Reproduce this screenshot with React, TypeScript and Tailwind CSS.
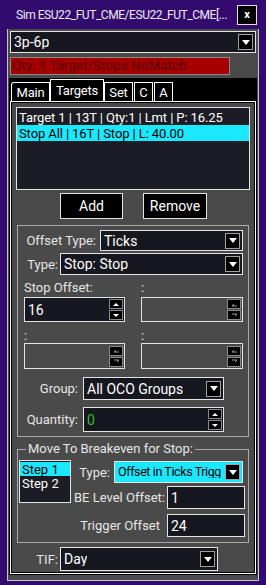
import React from "react";

const font = "font-['Roboto',_'Liberation_Sans',_sans-serif]";

function Arrow() {
  return (
    <div className="ml-auto mr-[2px] w-[15px] h-[16px] bg-black border border-[#a0a0a0] flex items-center justify-center shrink-0">
      <svg width="8" height="5" viewBox="0 0 8 5">
        <path d="M0 0h8L4 5z" fill="white" />
      </svg>
    </div>
  );
}

function Combo({ value, className, cyan }: { value: string; className: string; cyan?: boolean }) {
  return (
    <div
      className={`flex items-center border border-[#e4e4e4] overflow-hidden whitespace-nowrap shrink-0 ${
        cyan ? "bg-[#19e8ff] text-black" : "bg-[#17171f] text-white"
      } ${className}`}
    >
      <span className="pl-[3px] overflow-hidden">{value}</span>
      <Arrow />
    </div>
  );
}

function SpinBtn({ up, off }: { up?: boolean; off?: boolean }) {
  return (
    <div className="w-[14px] h-[10px] bg-black border border-[#8a8a8a] flex items-center justify-center">
      {off ? (
        <svg width="7" height="5" viewBox="0 0 7 5">
          {up ? (
            <path d="M1 4h5M1 4l2-2" stroke="#9a9a9a" strokeWidth="1" fill="none" />
          ) : (
            <path d="M1 1h5M6 1l-2 2" stroke="#9a9a9a" strokeWidth="1" fill="none" />
          )}
        </svg>
      ) : (
        <svg width="6" height="3" viewBox="0 0 6 3">
          <path d={up ? "M0 3h6L3 0z" : "M0 0h6L3 3z"} fill="white" />
        </svg>
      )}
    </div>
  );
}

function Spinner({ value, className, off, green }: { value?: string; className: string; off?: boolean; green?: boolean }) {
  return (
    <div
      className={`flex items-center border border-[#e4e4e4] shrink-0 ${off ? "bg-[#4a4a4a]" : "bg-[#17171f]"} ${className}`}
    >
      <span className={`pl-[3px] ${green ? "text-[#2ec02e]" : "text-white"}`}>{value}</span>
      <div className="ml-auto mr-[1px] flex flex-col gap-[1px]">
        <SpinBtn up off={off} />
        <SpinBtn off={off} />
      </div>
    </div>
  );
}

function TextBox({ value }: { value: string }) {
  return (
    <div className="w-[78px] h-[23px] border border-[#e4e4e4] bg-[#17171f] text-white text-[14px] flex items-center pl-[3px] shrink-0">
      {value}
    </div>
  );
}

export default function App() {
  return (
    <div className={`w-[266px] h-[585px] bg-[#330a6e] text-[13px] leading-none text-[#e6e6e6] overflow-hidden ${font}`}>
      <div className="h-[29px] flex items-center pl-[16px] pr-[9px]">
        <span className="text-[12px] tracking-[-0.45px] text-[#ececf4] whitespace-nowrap">
          Sim ESU22_FUT_CME/ESU22_FUT_CME[...
        </span>
        <div className="ml-auto w-[20px] h-[20px] bg-black border border-[#e0e0e0] flex items-center justify-center text-white text-[11px] font-bold shrink-0">
          x
        </div>
      </div>

      <div className="ml-[7px] w-[252px] h-[552px] bg-[#4a4a4a] border-x border-b border-[#c8c8c8] flex flex-col">
        <Combo value="3p-6p" className="mt-[2px] ml-[2px] w-[246px] h-[22px] text-[14px]" />
        <div className="mt-[4px] ml-[2px] w-[220px] h-[18px] bg-[#a50000] border border-[#8a8a8a] text-[#5a0000] flex items-center pl-[1px] text-[13.5px]">
          Qty: 1 Target/Stops NoMatch
        </div>

        <div className="mt-[3px] ml-[1px] w-[248px] bg-black pb-[1px]">
          <div className="h-[23px] flex items-end pl-[2px] text-white text-[13px] tracking-[-0.2px]">
            <div className="w-[39px] h-[19px] border-x border-t border-white rounded-tl-[3px] flex items-center justify-center">Main</div>
            <div className="w-[54px] h-[22px] border-x border-t border-white flex items-center justify-center">Targets</div>
            <div className="w-[29px] h-[19px] border-x border-t border-white flex items-center justify-center">Set</div>
            <div className="ml-[1px] w-[19px] h-[19px] border-x border-t border-white flex items-center justify-center">C</div>
            <div className="ml-[1px] w-[19px] h-[19px] border-x border-t border-white flex items-center justify-center">A</div>
          </div>

          <div className="mx-[1px] border border-white">
            <div className="border border-black bg-[#4a4a4a] flex flex-col pb-[1px]">
              <div className="mt-[4px] ml-[4px] w-[234px] h-[83px] border border-[#e4e4e4] bg-[#1c1c24] text-white pt-[2px] tracking-[-0.1px]">
                <div className="h-[15px] pl-[2px] flex items-center">Target 1 | 13T | Qty:1 | Lmt | P: 16.25</div>
                <div className="h-[16px] pl-[2px] flex items-center bg-[#19e8ff] text-black">Stop All | 16T | Stop | L: 40.00</div>
              </div>

              <div className="mt-[3px] flex text-white text-[14px]">
                <div className="ml-[48px] w-[63px] h-[26px] bg-black border border-[#e4e4e4] flex items-center justify-center">Add</div>
                <div className="ml-[20px] w-[64px] h-[26px] bg-black border border-[#e4e4e4] flex items-center justify-center">Remove</div>
              </div>

              <div className="mt-[6px] ml-[5px] w-[232px] border border-[#a8a8a8] flex flex-col pb-[4px]">
                <div className="mt-[4px] flex items-center">
                  <span className="w-[78px] text-right">Offset Type:</span>
                  <Combo value="Ticks" className="ml-[4px] w-[143px] h-[21px] text-[14px]" />
                </div>
                <div className="mt-[2px] flex items-center">
                  <span className="w-[40px] text-right">Type:</span>
                  <Combo value="Stop: Stop" className="ml-[2px] w-[183px] h-[22px] text-[14px]" />
                </div>
                <div className="mt-[5px] h-[15px] flex items-center">
                  <span className="ml-[6px] w-[117px]">Stop Offset:</span>
                  <span>:</span>
                </div>
                <div className="mt-[2px] flex">
                  <Spinner value="16" className="ml-[6px] w-[101px] h-[25px] text-[14px]" />
                  <Spinner off className="ml-[16px] w-[102px] h-[25px]" />
                </div>
                <div className="mt-[6px] h-[14px] flex items-center">
                  <span className="ml-[6px] w-[117px]">:</span>
                  <span>:</span>
                </div>
                <div className="mt-[1px] flex">
                  <Spinner off className="ml-[6px] w-[101px] h-[26px]" />
                  <Spinner off className="ml-[16px] w-[102px] h-[26px]" />
                </div>
                <div className="mt-[8px] flex items-center">
                  <span className="w-[60px] text-right">Group:</span>
                  <Combo value="All OCO Groups" className="ml-[5px] w-[141px] h-[23px] text-[14px]" />
                </div>
                <div className="mt-[7px] flex items-center">
                  <span className="w-[60px] text-right">Quantity:</span>
                  <Spinner value="0" green className="ml-[5px] w-[141px] h-[25px] text-[14px]" />
                </div>
              </div>

              <div className="relative mt-[12px] ml-[5px] w-[232px] border border-[#a8a8a8] flex pb-[5px]">
                <span className="absolute -top-[8px] left-[8px] px-[2px] bg-[#4a4a4a]">Move To Breakeven for Stop:</span>
                <div className="mt-[10px] ml-[1px] w-[52px] h-[43px] border border-[#e4e4e4] bg-[#1c1c24] text-white pt-[1px]">
                  <div className="h-[14px] pl-[2px] flex items-center bg-[#19e8ff] text-black">Step 1</div>
                  <div className="h-[14px] pl-[2px] flex items-center">Step 2</div>
                </div>
                <div className="flex flex-col">
                  <div className="mt-[11px] w-[172px] flex items-center justify-end">
                    <span>Type:</span>
                    <Combo value="Offset in Ticks Trigg" cyan className="ml-[4px] w-[129px] h-[22px] text-[12.5px] tracking-[-0.4px]" />
                  </div>
                  <div className="mt-[3px] w-[174px] flex items-center justify-end">
                    <span>BE Level Offset:</span>
                    <div className="ml-[2px]">
                      <TextBox value="1" />
                    </div>
                  </div>
                  <div className="mt-[5px] w-[174px] flex items-center justify-end">
                    <span>Trigger Offset</span>
                    <div className="ml-[7px]">
                      <TextBox value="24" />
                    </div>
                  </div>
                </div>
              </div>

              <div className="mt-[4px] flex items-center">
                <span className="w-[46px] text-right">TIF:</span>
                <Combo value="Day" className="ml-[2px] w-[158px] h-[24px] text-[14px]" />
              </div>
            </div>
          </div>
        </div>
      </div>
    </div>
  );
}
